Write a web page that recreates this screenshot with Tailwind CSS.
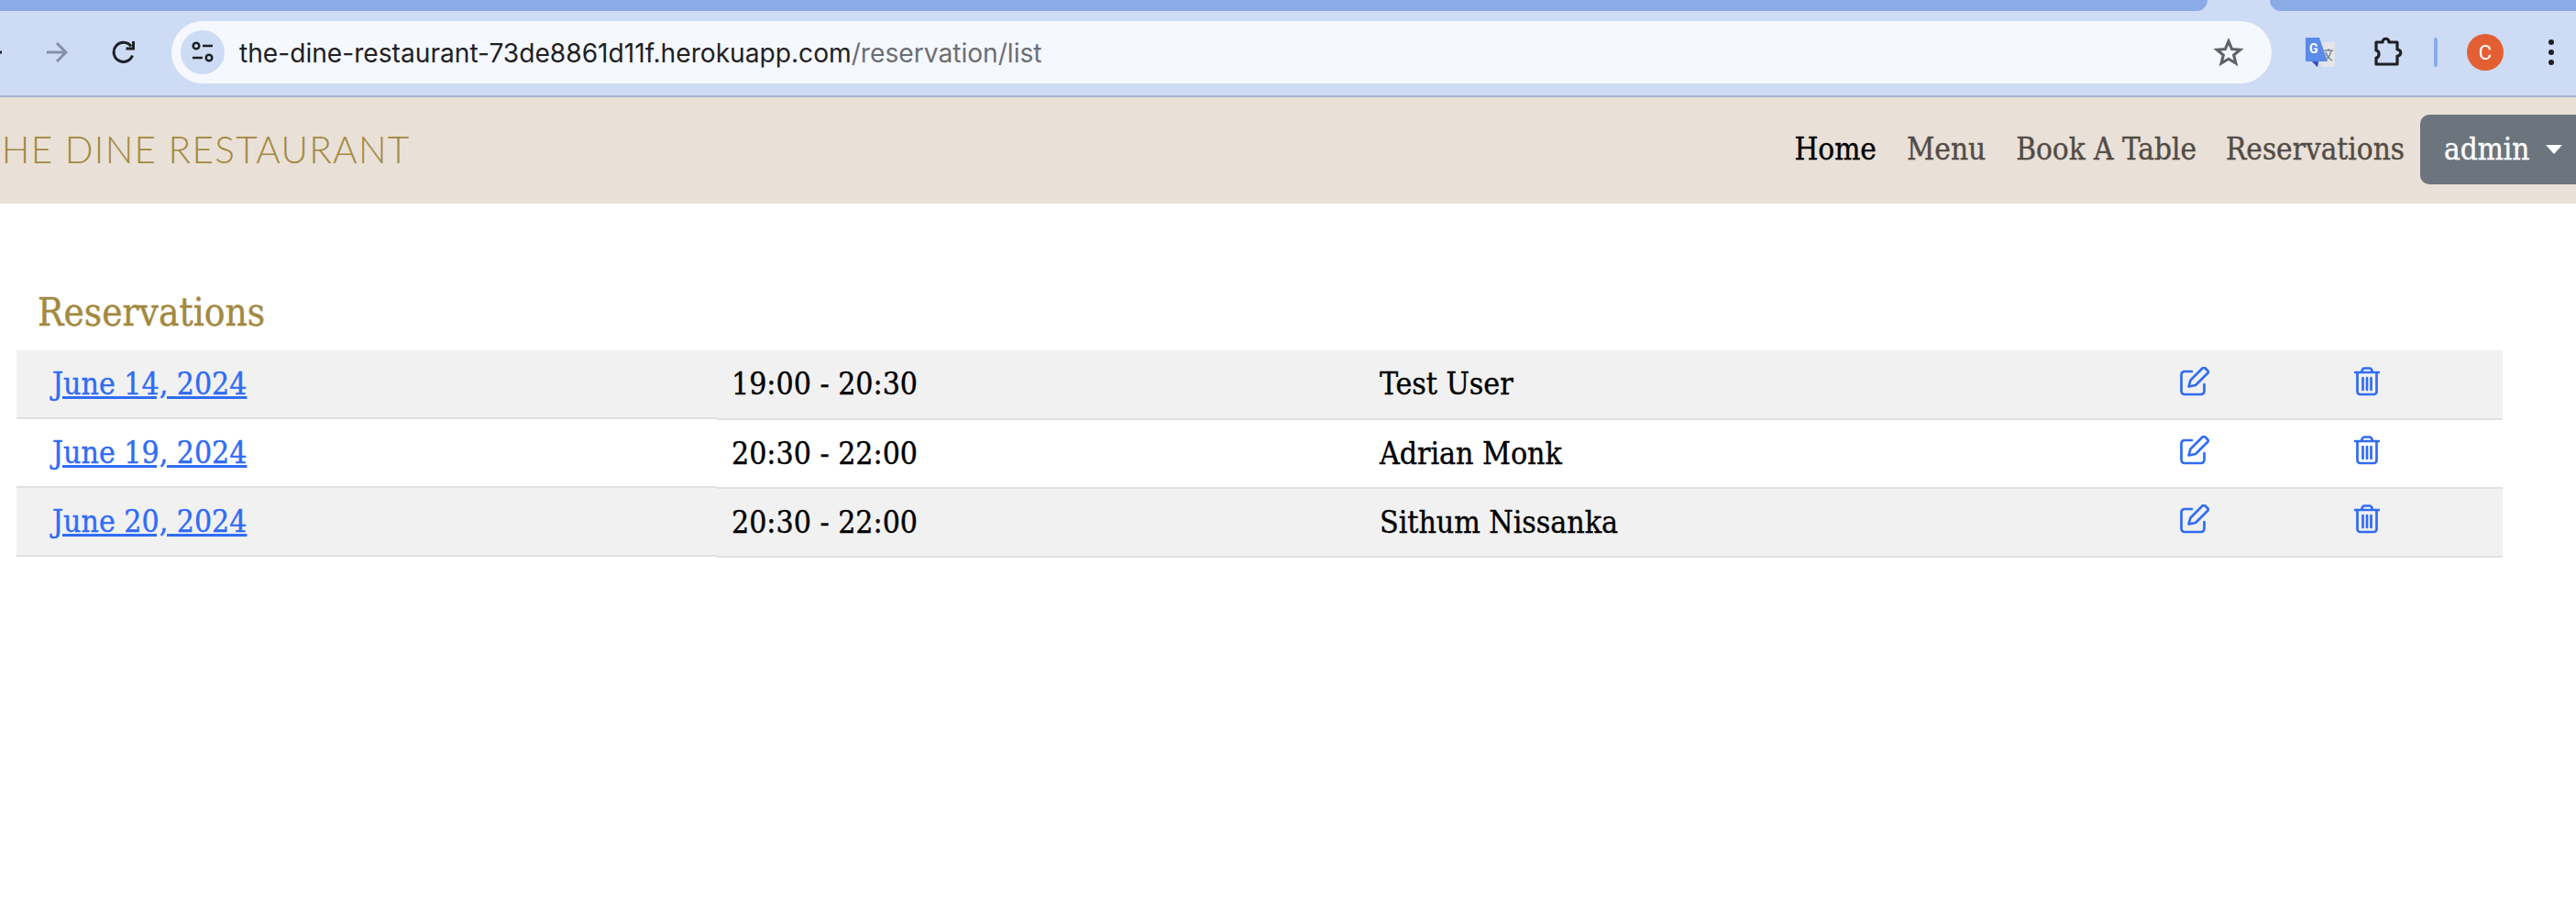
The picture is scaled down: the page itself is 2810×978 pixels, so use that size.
<!DOCTYPE html>
<html lang="en">
<head>
    <meta charset="UTF-8">
    <title>The Dine Restaurant</title>
    <script src="https://cdn.jsdelivr.net/npm/@tailwindcss/browser@4"></script>
</head>
<body class="h-screen overflow-hidden bg-white font-['DejaVu_Serif_Condensed',serif]">

    <!-- browser tabs -->
    <div class="flex h-[12px] bg-[#cddbf5]">
        <div class="w-[2408px] rounded-br-[14px] bg-[#8aabe5]"></div>
        <div class="ml-[68px] flex-1 rounded-bl-[14px] bg-[#8aabe5]"></div>
    </div>

    <!-- browser toolbar -->
    <div class="flex h-[94px] items-center border-b-2 border-[#a8b4cf] bg-[#cddbf5] pb-[2px]">
        <svg class="ml-[-20px] h-6 w-6 shrink-0" viewBox="0 0 24 24" fill="none" stroke="#1f2023" stroke-width="3"><path d="M22 12H2M12 2 2 12l10 10"/></svg>
        <svg class="ml-[46px] h-6 w-6 shrink-0" viewBox="0 0 24 24" fill="none" stroke="#8690a4" stroke-width="3"><path d="M1 12h21M12 2l10 10-10 10"/></svg>
        <svg class="ml-[48px] h-[26px] w-[26px] shrink-0" viewBox="0 0 26 26" fill="none" stroke="#1f2023" stroke-width="3"><path d="M22.500 16.500A10.500 10.500 0 1 1 21 6.500"/><path d="M23.500 1v8h-8" /></svg>
        <div class="ml-[39px] flex h-[68px] w-[2291px] shrink-0 items-center rounded-full bg-[#f5f8fe] pl-[10px] pr-[30px] font-['Inter',sans-serif] text-[28.150px]">
            <div class="flex h-[48px] w-[48px] items-center justify-center rounded-full bg-[#cddbf5]">
                <svg class="h-[26px] w-[26px]" viewBox="0 0 26 26" fill="none" stroke="#1f2023" stroke-width="2.500"><circle cx="6" cy="6" r="3.300"/><path d="M13 6h11M2 19h11"/><circle cx="20" cy="19" r="3.300"/></svg>
            </div>
            <span class="ml-[16px] mt-[2px] text-[#1f2023]">the-dine-restaurant-73de8861d11f.herokuapp.com</span><span class="mt-[2px] text-[#6c6e73]">/reservation/list</span>
            <svg class="ml-auto h-[34px] w-[34px]" viewBox="0 0 24 24" fill="none" stroke="#5f6368" stroke-width="2.200" stroke-linejoin="miter"><path d="M12 3.500l2.500 6 6.500.5-5 4.200 1.600 6.300L12 17.100 6.400 20.500 8 14.200 3 10l6.500-.5z"/></svg>
        </div>
        <svg class="ml-[36px] h-[34px] w-[34px] shrink-0" viewBox="0 0 34 34">
            <path d="M12 6h20a1 1 0 0 1 1 1v25a1 1 0 0 1-1 1H18z" fill="#e3e5e8"/>
            <path d="M2 1h14l9 26H15l-1 6-6-6H2a1 1 0 0 1-1-1V2a1 1 0 0 1 1-1z" fill="#5a8aea"/>
            <path d="M15 27l-1 6-6-6z" fill="#3b4cb8"/>
            <text x="5" y="18" font-family="Roboto" font-size="14" font-weight="700" fill="#fff">G</text>
            <path d="M21 15h10M26 13v2M29 15c-1 6-4 9-7 11M23 17c1 4 4 7 7 9" fill="none" stroke="#7d8a96" stroke-width="1.500"/>
        </svg>
        <svg class="ml-[41px] h-[34px] w-[34px] shrink-0" viewBox="0 0 34 34" fill="none" stroke="#1f2023" stroke-width="3.200" stroke-linejoin="round"><path d="M3 6h7c0-5 7-5 7 0h9v8c5 0 5 7 0 7v9H3v-7c4 0 4-8 0-8z"/></svg>
        <div class="ml-[32px] h-[32px] w-[4px] shrink-0 rounded-full bg-[#8aabe5]"></div>
        <div class="ml-[32px] flex h-[40px] w-[40px] shrink-0 items-center justify-center rounded-full bg-[#e35f33] font-['Roboto',sans-serif] text-[22px] text-white">C</div>
        <svg class="ml-[46px] h-[30px] w-[12px] shrink-0" viewBox="0 0 12 30" fill="#1f2023"><circle cx="6" cy="4" r="3"/><circle cx="6" cy="15" r="3"/><circle cx="6" cy="26" r="3"/></svg>
    </div>

    <!-- site navbar -->
    <nav class="flex h-[116px] items-center overflow-hidden bg-[#e9e0d7]">
        <a class="ml-[-23px] mb-[2px] shrink-0 font-['Lato',sans-serif] text-[40.500px] font-light tracking-[1.300px] text-[#a3893f]">THE DINE RESTAURANT</a>
        <div class="ml-auto flex items-center pb-[2px] text-[33px] [-webkit-text-stroke:0.4px]">
            <a class="text-black">Home</a>
            <a class="ml-[33px] text-[#524c46]">Menu</a>
            <a class="ml-[33px] text-[#524c46]">Book A Table</a>
            <a class="ml-[32px] text-[#524c46]">Reservations</a>
            <button class="ml-[17px] mr-[-20px] flex h-[76px] w-[190px] items-center rounded-[10px] bg-[#6c757d] pl-[26px] text-white">
                admin
                <span class="ml-[18px] h-0 w-0 border-x-[9px] border-t-[10px] border-x-transparent border-t-white"></span>
            </button>
        </div>
    </nav>

    <!-- reservations -->
    <main class="pl-[18px] pt-[94px]">
        <h2 class="ml-[23px] h-[66px] text-[42px] leading-[50px] text-[#a3893f] [-webkit-text-stroke:0.4px]">Reservations</h2>

        <!-- the date column sits 1px higher than the rest of the table -->
        <div class="flex w-[2712px] text-[33.500px] leading-[48px] text-black [-webkit-text-stroke:0.4px]">
            <div class="w-[764px] text-[#306cf5] underline">
                <div class="flex h-[75px] items-center border-b-2 border-[#dee2e6] bg-[#f1f1f1] pl-[39px]"><a>June 14, 2024</a></div>
                <div class="flex h-[75px] items-center border-b-2 border-[#dee2e6] pl-[39px]"><a>June 19, 2024</a></div>
                <div class="flex h-[75px] items-center border-b-2 border-[#dee2e6] bg-[#f1f1f1] pl-[39px]"><a>June 20, 2024</a></div>
            </div>
            <div class="flex-1">
                <div class="grid h-[76px] grid-cols-[707px_873px_190px_1fr] items-center border-b-2 border-[#dee2e6] bg-[#f1f1f1] pl-[16px]">
                    <span>19:00 - 20:30</span>
                    <span>Test User</span>
                    <svg class="mb-[7px] h-[32px] w-[32px]" viewBox="0 0 32 32" fill="none" stroke="#306cf5" stroke-width="2.700" stroke-linecap="round" stroke-linejoin="round"><path d="M13 5H5a3.500 3.500 0 0 0-3.500 3.500v18A3.500 3.500 0 0 0 5 30h18a3.500 3.500 0 0 0 3.500-3.500V19"/><path d="M9.500 21.500l2-7L24.500 1.500c1-1 2-1 3 0l2.500 2.500c1 1 1 2 0 3L17 20z"/></svg>
                    <svg class="mb-[7px] h-[32px] w-[28px]" viewBox="0 0 28 32" fill="none" stroke="#306cf5" stroke-width="2.700" stroke-linecap="round" stroke-linejoin="round"><path d="M1 6h26M8 5.500l1-2.500c.5-1 1-1.500 2-1.500h6c1 0 1.500.5 2 1.500l1 2.500M3.500 6v21a3 3 0 0 0 3 3h15a3 3 0 0 0 3-3V6M9.500 12v13M14 12v13M18.500 12v13"/></svg>
                </div>
                <div class="grid h-[75px] grid-cols-[707px_873px_190px_1fr] items-center border-b-2 border-[#dee2e6] pl-[16px]">
                    <span>20:30 - 22:00</span>
                    <span>Adrian Monk</span>
                    <svg class="mb-[7px] h-[32px] w-[32px]" viewBox="0 0 32 32" fill="none" stroke="#306cf5" stroke-width="2.700" stroke-linecap="round" stroke-linejoin="round"><path d="M13 5H5a3.500 3.500 0 0 0-3.500 3.500v18A3.500 3.500 0 0 0 5 30h18a3.500 3.500 0 0 0 3.500-3.500V19"/><path d="M9.500 21.500l2-7L24.500 1.500c1-1 2-1 3 0l2.500 2.500c1 1 1 2 0 3L17 20z"/></svg>
                    <svg class="mb-[7px] h-[32px] w-[28px]" viewBox="0 0 28 32" fill="none" stroke="#306cf5" stroke-width="2.700" stroke-linecap="round" stroke-linejoin="round"><path d="M1 6h26M8 5.500l1-2.500c.5-1 1-1.500 2-1.500h6c1 0 1.500.5 2 1.500l1 2.500M3.500 6v21a3 3 0 0 0 3 3h15a3 3 0 0 0 3-3V6M9.500 12v13M14 12v13M18.500 12v13"/></svg>
                </div>
                <div class="grid h-[75px] grid-cols-[707px_873px_190px_1fr] items-center border-b-2 border-[#dee2e6] bg-[#f1f1f1] pl-[16px]">
                    <span>20:30 - 22:00</span>
                    <span>Sithum Nissanka</span>
                    <svg class="mb-[7px] h-[32px] w-[32px]" viewBox="0 0 32 32" fill="none" stroke="#306cf5" stroke-width="2.700" stroke-linecap="round" stroke-linejoin="round"><path d="M13 5H5a3.500 3.500 0 0 0-3.500 3.500v18A3.500 3.500 0 0 0 5 30h18a3.500 3.500 0 0 0 3.500-3.500V19"/><path d="M9.500 21.500l2-7L24.500 1.500c1-1 2-1 3 0l2.500 2.500c1 1 1 2 0 3L17 20z"/></svg>
                    <svg class="mb-[7px] h-[32px] w-[28px]" viewBox="0 0 28 32" fill="none" stroke="#306cf5" stroke-width="2.700" stroke-linecap="round" stroke-linejoin="round"><path d="M1 6h26M8 5.500l1-2.500c.5-1 1-1.500 2-1.500h6c1 0 1.500.5 2 1.500l1 2.500M3.500 6v21a3 3 0 0 0 3 3h15a3 3 0 0 0 3-3V6M9.500 12v13M14 12v13M18.500 12v13"/></svg>
                </div>
            </div>
        </div>
    </main>
</body>
</html>
